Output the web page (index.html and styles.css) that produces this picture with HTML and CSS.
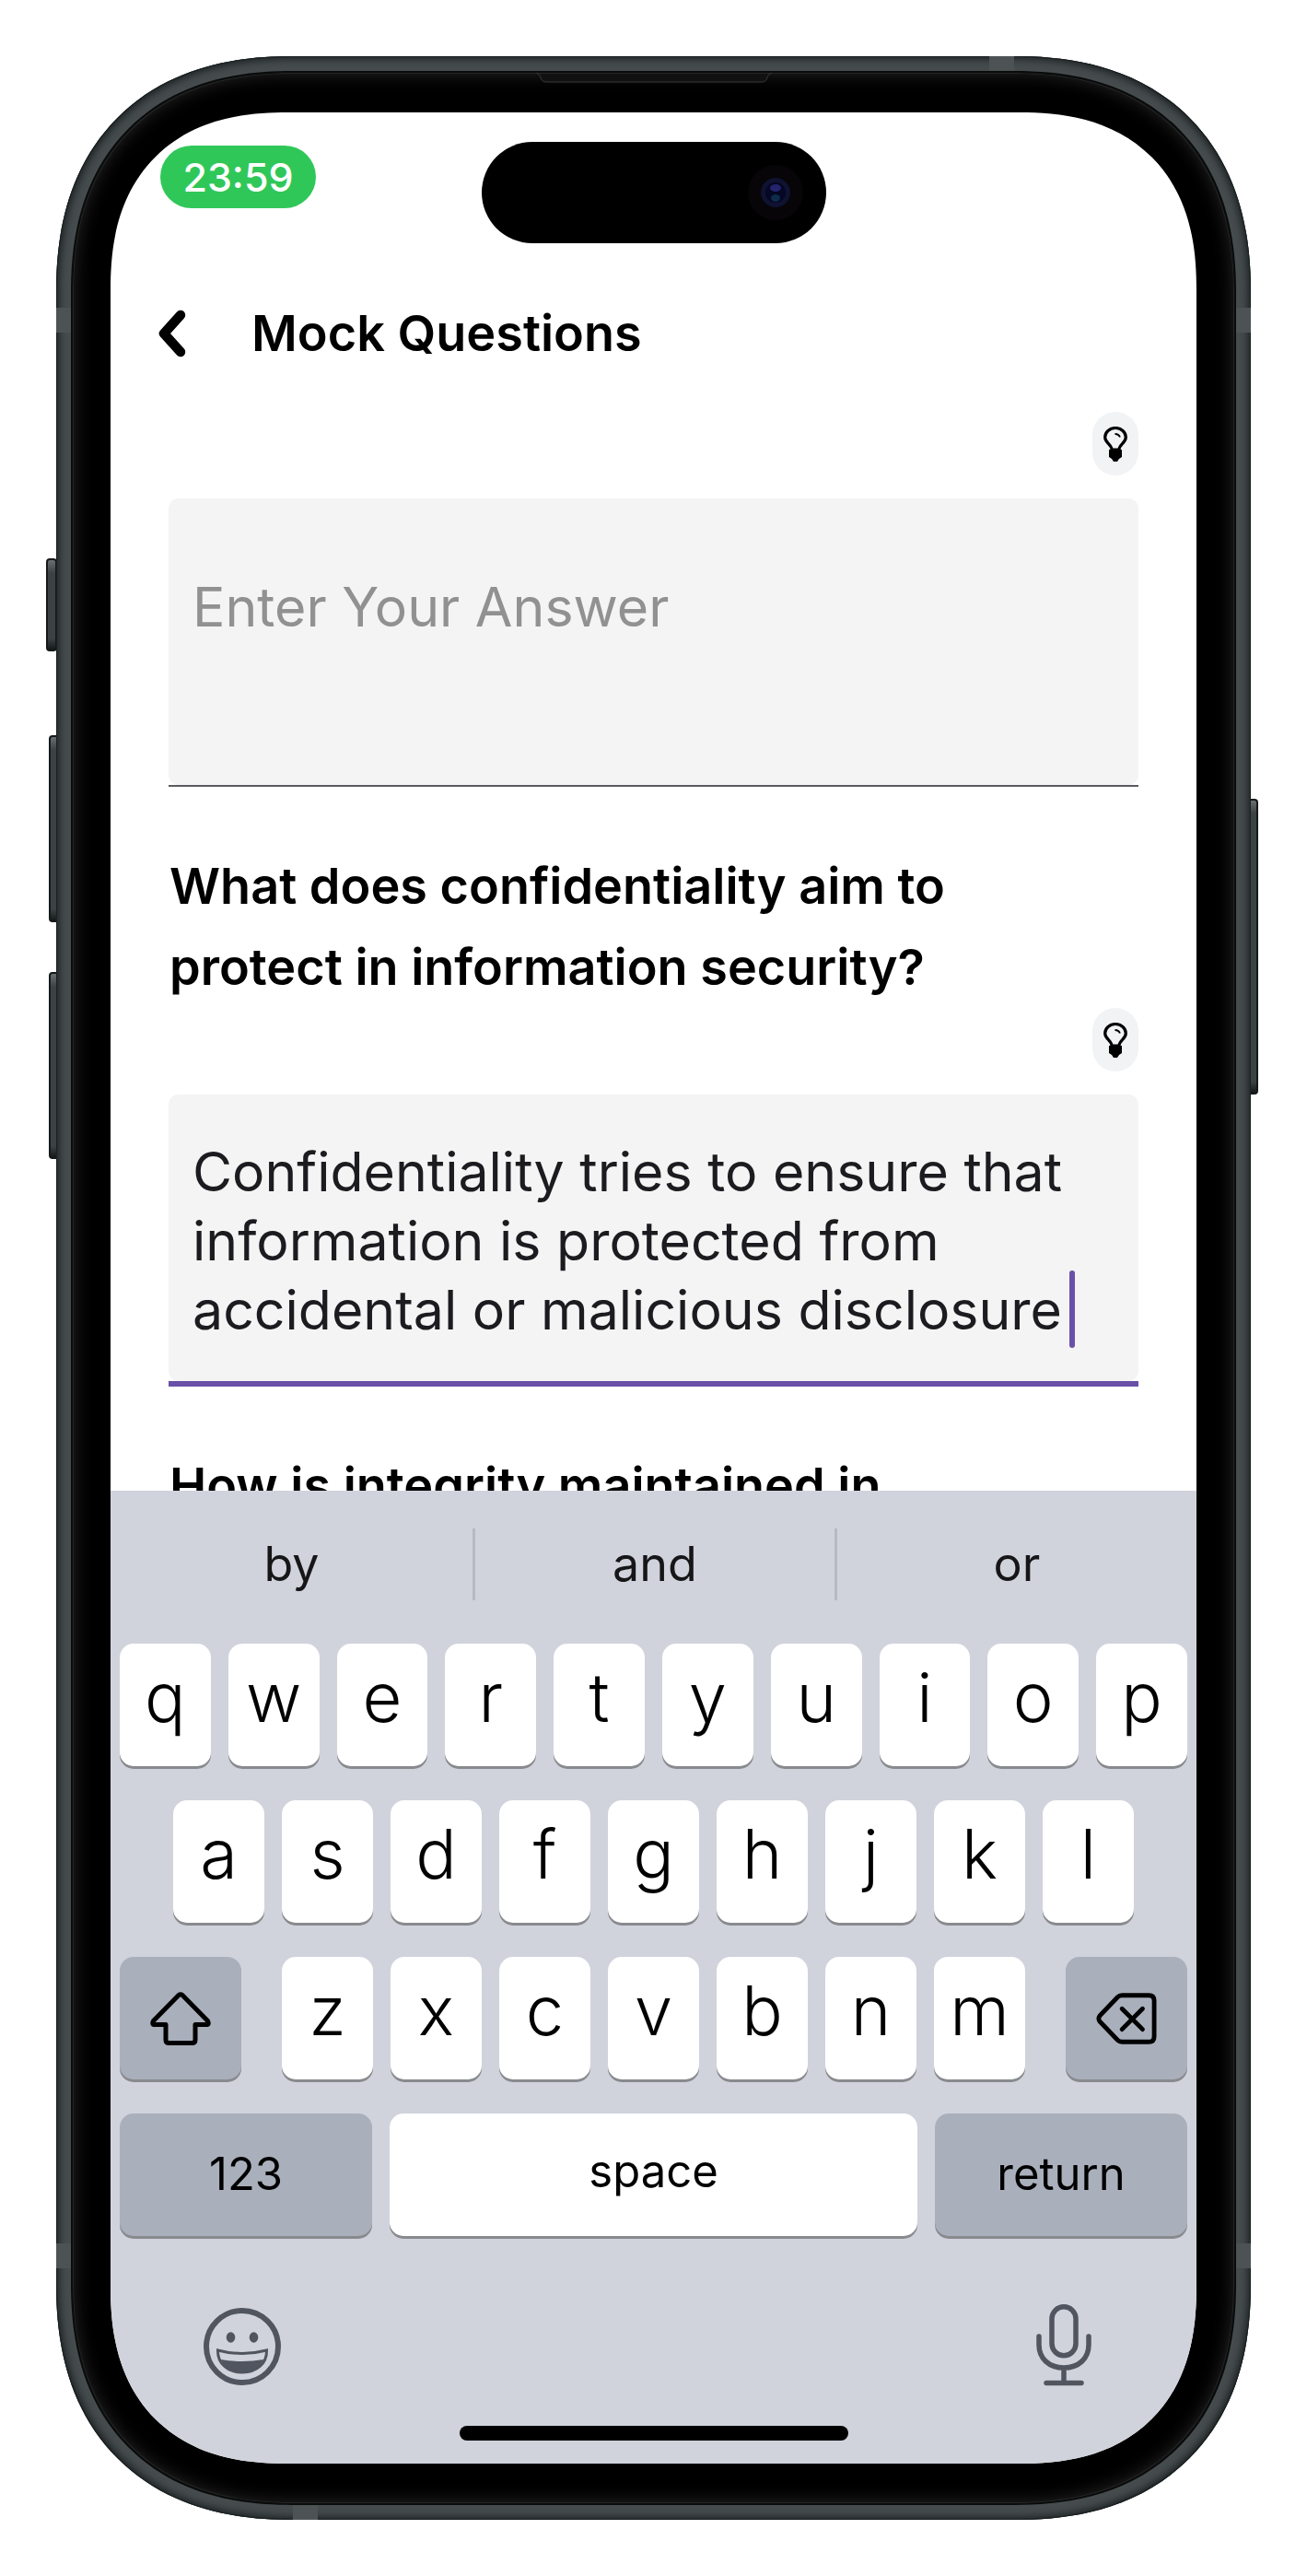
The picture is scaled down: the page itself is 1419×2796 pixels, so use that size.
FILE: index.html
```html
<!DOCTYPE html>
<html lang="en">
<head>
<meta charset="utf-8">
<meta name="viewport" content="width=device-width, initial-scale=1">
<title>Mock Questions</title>
<link rel="stylesheet" href="styles.css">
</head>
<body>
<div class="phone">
  <span class="side-button side-button--action"></span>
  <span class="side-button side-button--up"></span>
  <span class="side-button side-button--down"></span>
  <span class="side-button side-button--power"></span>
  <div class="frame">
    <span class="band band--left-top"></span>
    <span class="band band--left-bottom"></span>
    <span class="band band--right-top"></span>
    <span class="band band--right-bottom"></span>
    <span class="band band--top"></span>
    <span class="band band--bottom"></span>
    <div class="bezel">
      <svg class="earpiece" viewBox="0 0 256 11"><path d="M0 0h256q-4 1-5 5q-1 5-6 5H11q-5 0-6-5q-1-4-5-5z" fill="#111" stroke="#3a3a3a"/></svg>
      <div class="screen">
        <div class="status">
          <span class="clock">23:59</span>
          <div class="island">
            <svg class="camera" viewBox="0 0 60 60">
              <circle cx="30" cy="30" r="30" fill="#070508"/>
              <circle cx="30" cy="30" r="16" fill="#0f1230"/>
              <circle cx="30" cy="30" r="11" fill="#050724"/>
              <ellipse cx="30" cy="25" rx="6" ry="4" fill="#24246e"/>
              <ellipse cx="30" cy="36" rx="5" ry="4" fill="#0c2c4a"/>
            </svg>
          </div>
        </div>
        <header class="header">
          <button class="back" type="button" aria-label="Back">
            <svg viewBox="0 0 32 52"><path d="M25 6L7 26l18 20" fill="none" stroke="#000" stroke-width="10.500" stroke-linecap="round" stroke-linejoin="round"/></svg>
          </button>
          <h1 class="title">Mock Questions</h1>
        </header>
        <main class="questions">
          <section class="question">
            <button class="hint" type="button" aria-label="Hint">
              <svg viewBox="0 0 26 38"><path d="M9 25C9 19 1.700 18 1.700 11.500a11.300 10 0 0 1 22.600 0C24.300 18 17 19 17 25z" fill="none" stroke="#000" stroke-width="3.200"/><path d="M12.500 8q4 0 5.500 3.500" fill="none" stroke="#000" stroke-width="1.800"/><path d="M6 25h14v8l-3 2-2 3h-4l-2-3-3-2z"/></svg>
            </button>
            <div class="field"><textarea class="answer answer--empty" aria-label="Answer" placeholder="Enter Your Answer"></textarea></div>
          </section>
          <section class="question">
            <h2 class="prompt"><label for="answer-2">What does confidentiality aim to protect in information security?</label></h2>
            <button class="hint" type="button" aria-label="Hint">
              <svg viewBox="0 0 26 38"><path d="M9 25C9 19 1.700 18 1.700 11.500a11.300 10 0 0 1 22.600 0C24.300 18 17 19 17 25z" fill="none" stroke="#000" stroke-width="3.200"/><path d="M12.500 8q4 0 5.500 3.500" fill="none" stroke="#000" stroke-width="1.800"/><path d="M6 25h14v8l-3 2-2 3h-4l-2-3-3-2z"/></svg>
            </button>
            <div class="field field--active">
              <textarea class="answer" id="answer-2">Confidentiality tries to ensure that information is protected from accidental or malicious disclosure</textarea>
              <span class="caret"></span>
            </div>
          </section>
          <section class="question">
            <h2 class="prompt">How is integrity maintained in</h2>
          </section>
        </main>
        <div class="keyboard">
          <div class="suggestions">
            <button class="suggestion" type="button">by</button>
            <button class="suggestion" type="button">and</button>
            <button class="suggestion" type="button">or</button>
          </div>
          <div class="keys">
            <div class="row row--ten">
              <button class="key" type="button">q</button><button class="key" type="button">w</button><button class="key" type="button">e</button><button class="key" type="button">r</button><button class="key" type="button">t</button><button class="key" type="button">y</button><button class="key" type="button">u</button><button class="key" type="button">i</button><button class="key" type="button">o</button><button class="key" type="button">p</button>
            </div>
            <div class="row row--nine">
              <button class="key" type="button">a</button><button class="key" type="button">s</button><button class="key" type="button">d</button><button class="key" type="button">f</button><button class="key" type="button">g</button><button class="key" type="button">h</button><button class="key" type="button">j</button><button class="key" type="button">k</button><button class="key" type="button">l</button>
            </div>
            <div class="row row--seven">
              <button class="key key--dark" type="button" aria-label="Shift">
                <svg class="key-icon" viewBox="0 0 66 58"><path d="M31 3.500q2-1.500 4 0L62.500 31.500q2 4-1.500 4H49V52q0 3.500-3.500 3.500h-25Q17 55.500 17 52V35.500H5q-3.500 0-1.500-4z" fill="none" stroke="#000" stroke-width="5" stroke-linejoin="round"/></svg>
              </button>
              <div class="letters">
                <button class="key" type="button">z</button><button class="key" type="button">x</button><button class="key" type="button">c</button><button class="key" type="button">v</button><button class="key" type="button">b</button><button class="key" type="button">n</button><button class="key" type="button">m</button>
              </div>
              <button class="key key--dark" type="button" aria-label="Delete">
                <svg class="key-icon" viewBox="0 0 68 58"><path d="M29 3h30q6 0 6 6v40q0 6-6 6H29q-3 0-5-2L4 32q-2-3 0-6L24 5q2-2 5-2z" fill="none" stroke="#000" stroke-width="5"/><path d="M29 18l23 23M52 18L29 41" stroke="#000" stroke-width="5" stroke-linecap="round"/></svg>
              </button>
            </div>
            <div class="row row--space">
              <button class="key key--dark key--word" type="button">123</button>
              <button class="key key--word key--space" type="button">space</button>
              <button class="key key--dark key--word" type="button">return</button>
            </div>
          </div>
          <div class="tools">
            <button class="tool" type="button" aria-label="Emoji">
              <svg viewBox="0 0 84 90" width="84" height="90"><circle cx="42" cy="46" r="39" fill="none" stroke="#50555f" stroke-width="6"/><ellipse cx="29.500" cy="36" rx="4.800" ry="5.800" fill="#50555f"/><ellipse cx="54.500" cy="36" rx="4.800" ry="5.800" fill="#50555f"/><path d="M15.500 50q26.500 7 53 0C69 64 58 74 42 74S15 64 15.500 50z" fill="none" stroke="#50555f" stroke-width="3"/><path d="M19 60q23 4 46 0C61 70 52 74 42 74s-19-4-23-14z" fill="#50555f"/></svg>
            </button>
            <button class="tool" type="button" aria-label="Dictate">
              <svg viewBox="0 0 60 90" width="60" height="90"><g fill="none" stroke="#50555f" stroke-width="5.500" stroke-linecap="round"><rect x="17" y="2.800" width="26" height="53" rx="13"/><path d="M3 35v9c0 15 11 25 27 25s27-10 27-25v-9M30 69v16M11 85.500h38"/></g></svg>
            </button>
          </div>
          <span class="home"></span>
        </div>
      </div>
    </div>
  </div>
</div>
</body>
</html>
```

FILE: styles.css
```css
* { box-sizing: border-box; }

body {
  margin: 0;
  padding: 61px;
  height: 100vh;
  background: #fff;
  font-family: Inter, "Liberation Sans", sans-serif;
  color: #000;
}

button {
  margin: 0;
  padding: 0;
  border: 0;
  background: none;
  color: inherit;
  font: inherit;
}

svg { display: block; }

/* Hardware */
.phone { position: relative; height: 100%; }

.frame {
  position: relative;
  height: 100%;
  padding: 16px;
  overflow: hidden;
  border-radius: 232px;
  background: #464c4e;
  box-shadow: inset 0 0 0 1px #1b2021, inset 0 0 9px 3px #1b2021;
}

.bezel {
  position: relative;
  height: 100%;
  padding: 43px 41px;
  border: 2px solid #0a0c0c;
  border-radius: 216px;
  background: #000;
  box-shadow: inset 0 0 0 1px #242424, inset 0 0 20px #2a2a2a;
}

.earpiece {
  position: absolute;
  top: 0;
  left: 50%;
  width: 256px;
  height: 11px;
  margin-left: -128px;
}

.side-button {
  position: absolute;
  width: 12px;
  border: 2px solid #15191a;
  border-radius: 4px;
  background: linear-gradient(#6a7072, #3c4244 14px, #3c4244 calc(100% - 12px), #15191a);
}
.side-button--action { left: -11px; top: 545px; height: 101px; }
.side-button--up { left: -8px; top: 737px; height: 203px; }
.side-button--down { left: -8px; top: 994px; height: 203px; }
.side-button--power { right: -8px; top: 806px; height: 321px; }

.band { position: absolute; background: #4d5354; }
.band--left-top, .band--left-bottom { left: 0; width: 16px; height: 27px; }
.band--right-top, .band--right-bottom { right: 0; width: 16px; height: 27px; }
.band--left-top, .band--right-top { top: 273px; }
.band--left-bottom, .band--right-bottom { bottom: 273px; }
.band--top { top: 0; right: 257px; width: 27px; height: 16px; }
.band--bottom { bottom: 0; left: 257px; width: 27px; height: 16px; }

/* Screen */
.screen {
  display: flex;
  flex-direction: column;
  height: 100%;
  overflow: hidden;
  border-radius: 168px;
  background: #fff;
}

/* Continuous-curvature corners where the browser can draw them */
@supports (corner-shape: superellipse(1.2)) {
  .frame { border-radius: 256px; corner-shape: superellipse(1.2); }
  .bezel { border-radius: 240px; corner-shape: superellipse(1.2); }
  .screen { border-radius: 192px; corner-shape: superellipse(1.25); }
}

.status {
  display: grid;
  grid-template-columns: 1fr 374px 1fr;
  align-items: start;
  padding: 32px 54px 0;
}

.clock {
  justify-self: start;
  width: 169px;
  margin-top: 4px;
  border-radius: 34px;
  background: #30c759;
  color: #fff;
  font-size: 43px;
  font-weight: 500;
  line-height: 68px;
  text-align: center;
}

.island {
  display: flex;
  align-items: center;
  justify-content: flex-end;
  height: 110px;
  padding-right: 25px;
  border-radius: 55px;
  background: #000;
}

.camera { width: 60px; height: 60px; }

.header {
  display: flex;
  align-items: center;
  gap: 70px;
  height: 183px;
  padding: 12px 51px 0;
}

.back svg { width: 32px; height: 52px; }

.title {
  margin: 0;
  font-size: 54px;
  font-weight: 600;
  line-height: 88px;
}

.questions {
  flex: 1;
  min-height: 0;
  padding: 0 63px;
  overflow: hidden;
}

.question {
  display: flex;
  flex-direction: column;
  margin-bottom: 64px;
}

.prompt {
  margin: 0;
  padding: 0 120px 0 1px;
  font-size: 54px;
  font-weight: 600;
  line-height: 88px;
}

.hint {
  display: flex;
  align-items: center;
  justify-content: center;
  align-self: flex-end;
  width: 50px;
  height: 69px;
  margin-bottom: 25px;
  border-radius: 25px;
  background: #f2f3f5;
}

.hint svg { width: 26px; height: 38px; }

.field {
  position: relative;
  border-bottom: 2px solid #5c5b60;
}

.field--active { border-bottom: 6px solid #6a50a7; }

.answer {
  display: block;
  width: 100%;
  height: 311px;
  padding: 46px 26px 0;
  border: 0;
  border-radius: 11px;
  outline: 0;
  background: #f4f4f4;
  color: #1c1b1f;
  font: inherit;
  font-size: 59px;
  line-height: 75px;
  resize: none;
  overflow: hidden;
}

.answer--empty { padding-top: 80px; }
.answer::placeholder { color: #919191; opacity: 1; }

.caret {
  position: absolute;
  right: 69px;
  bottom: 36px;
  width: 6px;
  height: 84px;
  border-radius: 3px;
  background: #6a50a7;
}

/* Keyboard */
.keyboard {
  display: flex;
  flex-direction: column;
  height: 1056px;
  background: #d0d3dc;
}

.suggestions {
  display: grid;
  grid-template-columns: repeat(3, 1fr);
  padding: 41px 0 47px;
}

.suggestion {
  height: 78px;
  color: #161618;
  font-size: 52px;
  line-height: 78px;
}

.suggestion + .suggestion { border-left: 3px solid #b8bac0; }

.keys { display: grid; gap: 37px; padding: 0 10px; }

.row { display: grid; gap: 19px; }
.row--ten { grid-template-columns: repeat(10, 1fr); }
.row--nine { grid-template-columns: repeat(9, 1fr); padding: 0 58px; }
.row--seven { grid-template-columns: 132px 1fr 132px; gap: 44px; }
.row--space { grid-template-columns: 274px 1fr 274px; }
.letters { display: grid; grid-template-columns: repeat(7, 1fr); gap: 19px; }

.key {
  display: flex;
  align-items: center;
  justify-content: center;
  height: 133px;
  padding-bottom: 18px;
  border-radius: 15px;
  background: #fff;
  box-shadow: 0 3px 0 #898a8e;
  font-size: 74px;
  font-weight: 350;
}

.key--dark { padding-bottom: 0; background: #a9afbb; }
.key--word { padding-bottom: 2px; font-size: 49px; font-weight: 400; }
.key--space { padding-bottom: 8px; }
.key-icon { width: 66px; height: 58px; }

.tools {
  display: flex;
  justify-content: space-between;
  padding: 74px 114px 0 101px;
}

.home {
  align-self: center;
  width: 422px;
  height: 16px;
  margin-top: 42px;
  border-radius: 8px;
  background: #000;
}
```
